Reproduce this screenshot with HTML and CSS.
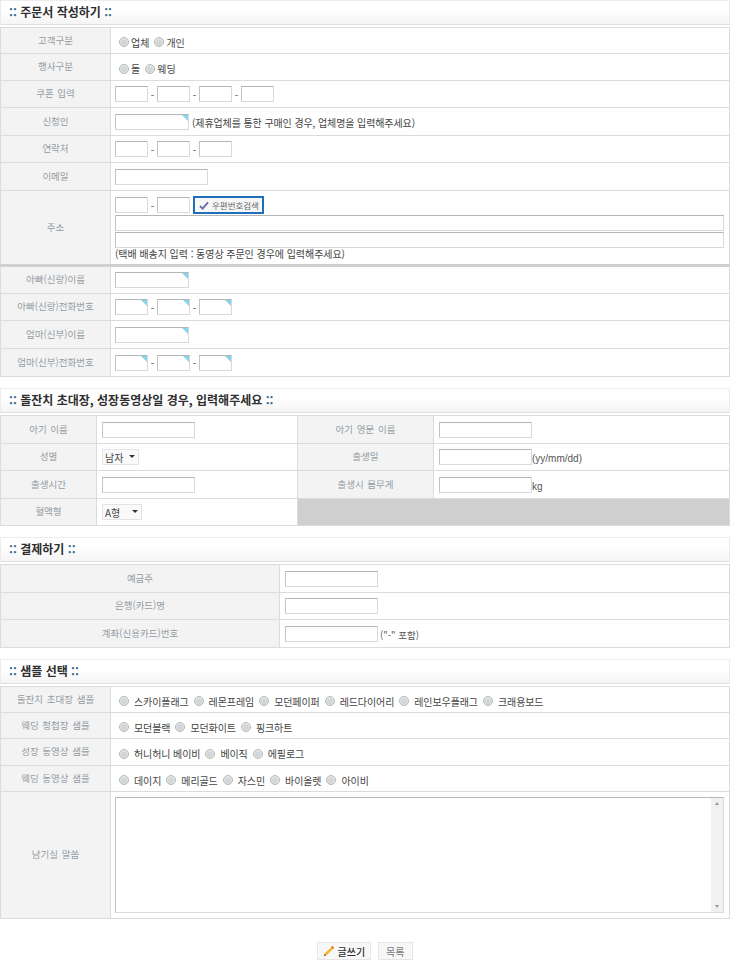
FILE: index.html
```html
<!DOCTYPE html>
<html lang="ko">
<head>
<meta charset="utf-8">
<title>주문서 작성하기</title>
<link rel="stylesheet" href="styles.css">
</head>
<body>
<h2 class="title"><span class="dots">::</span> 주문서 작성하기 <span class="dots">::</span></h2>
<table class="form cols-110">
  <tr class="r26"><th>고객구분</th><td class="opts"><label class="opt tight"><input type="radio" name="a"><span>업체</span></label><label class="opt tight"><input type="radio" name="a"><span>개인</span></label></td></tr>
  <tr class="r27"><th>행사구분</th><td class="opts"><label class="opt tight"><input type="radio" name="b"><span>돌</span></label><label class="opt tight"><input type="radio" name="b"><span>웨딩</span></label></td></tr>
  <tr class="r27"><th>쿠폰 입력</th><td><div class="line"><input class="in s"><i>-</i><input class="in s"><i>-</i><input class="in s"><i>-</i><input class="in s"></div></td></tr>
  <tr class="r28"><th>신청인</th><td><div class="line"><span class="in m req"></span><span class="note">(제휴업체를 통한 구매인 경우, 업체명을 입력해주세요)</span></div></td></tr>
  <tr class="r27"><th>연락처</th><td><div class="line"><input class="in s"><i>-</i><input class="in s"><i>-</i><input class="in s"></div></td></tr>
  <tr class="r28"><th>이메일</th><td><div class="line"><input class="in l"></div></td></tr>
  <tr class="addr"><th>주소</th><td>
    <div class="line"><input class="in s"><i>-</i><input class="in s"><button class="zip" type="button"><svg width="10" height="9" viewBox="0 0 10 9"><path d="M1 5 L3.6 7.6 L9 1.4" fill="none" stroke="#6a70ad" stroke-width="2"/></svg>우편번호검색</button></div>
    <input class="in full"><input class="in full">
    <div class="addr-note">(택배 배송지 입력 : 동영상 주문인 경우에 입력해주세요)</div>
  </td></tr>
  <tr class="r28"><th>아빠(신랑)이름</th><td><div class="line"><span class="in m req"></span></div></td></tr>
  <tr class="r27"><th>아빠(신랑)전화번호</th><td><div class="line"><span class="in s req"></span><i>-</i><span class="in s req"></span><i>-</i><span class="in s req"></span></div></td></tr>
  <tr class="r28"><th>엄마(신부)이름</th><td><div class="line"><span class="in m req"></span></div></td></tr>
  <tr class="r28"><th>엄마(신부)전화번호</th><td><div class="line"><span class="in s req"></span><i>-</i><span class="in s req"></span><i>-</i><span class="in s req"></span></div></td></tr>
</table>

<h2 class="title sec2"><span class="dots">::</span> 돌잔치 초대장, 성장동영상일 경우, 입력해주세요 <span class="dots">::</span></h2>
<table class="form cols-baby">
  <tr class="r28"><th>아기 이름</th><td><div class="line"><input class="in l"></div></td><th>아기 영문 이름</th><td><div class="line"><input class="in l"></div></td></tr>
  <tr class="r27"><th>성별</th><td><div class="line"><span class="sel w37"><select><option>남자</option></select></span></div></td><th>출생일</th><td><div class="line"><input class="in l"><span class="unit">(yy/mm/dd)</span></div></td></tr>
  <tr class="r28"><th>출생시간</th><td><div class="line"><input class="in l"></div></td><th>출생시 몸무게</th><td><div class="line"><input class="in l"><span class="unit">kg</span></div></td></tr>
  <tr class="r27"><th>혈액형</th><td><div class="line"><span class="sel w40"><select><option>A형</option></select></span></div></td><td class="blank" colspan="2"></td></tr>
</table>

<h2 class="title sec3"><span class="dots">::</span> 결제하기 <span class="dots">::</span></h2>
<table class="form cols-279">
  <tr class="r28"><th>예금주</th><td><div class="line"><input class="in l"></div></td></tr>
  <tr class="r27"><th>은행(카드)명</th><td><div class="line"><input class="in l"></div></td></tr>
  <tr class="r28"><th>계좌(신용카드)번호</th><td><div class="line"><input class="in l"><span class="unit pad">("-" 포함)</span></div></td></tr>
</table>

<h2 class="title sec3"><span class="dots">::</span> 샘플 선택 <span class="dots">::</span></h2>
<table class="form cols-110">
  <tr class="r26"><th>돌잔치 초대장 샘플</th><td class="opts"><label class="opt"><input type="radio" name="c"><span>스카이플래그</span></label><label class="opt"><input type="radio" name="c"><span>레몬프레임</span></label><label class="opt"><input type="radio" name="c"><span>모던페이퍼</span></label><label class="opt"><input type="radio" name="c"><span>레드다이어리</span></label><label class="opt"><input type="radio" name="c"><span>레인보우플래그</span></label><label class="opt"><input type="radio" name="c"><span>크래용보드</span></label></td></tr>
  <tr class="r26"><th>웨딩 청첩장 샘플</th><td class="opts"><label class="opt"><input type="radio" name="d"><span>모던블랙</span></label><label class="opt"><input type="radio" name="d"><span>모던화이트</span></label><label class="opt"><input type="radio" name="d"><span>핑크하트</span></label></td></tr>
  <tr class="r27"><th>성장 동영상 샘플</th><td class="opts"><label class="opt"><input type="radio" name="e"><span>허니허니 베이비</span></label><label class="opt"><input type="radio" name="e"><span>베이직</span></label><label class="opt"><input type="radio" name="e"><span>에필로그</span></label></td></tr>
  <tr class="r26"><th>웨딩 동영상 샘플</th><td class="opts"><label class="opt"><input type="radio" name="f"><span>데이지</span></label><label class="opt"><input type="radio" name="f"><span>메리골드</span></label><label class="opt"><input type="radio" name="f"><span>자스민</span></label><label class="opt"><input type="radio" name="f"><span>바이올렛</span></label><label class="opt"><input type="radio" name="f"><span>아이비</span></label></td></tr>
  <tr class="memo"><th>남기실 말씀</th><td><div class="memo-box"><textarea></textarea><div class="scroll"><span class="up"></span><span class="down"></span></div></div></td></tr>
</table>

<div class="actions">
  <button class="btn strong" type="button"><svg width="12" height="12" viewBox="0 0 12 12"><path d="M1 11 L2 8 L9 1.5 L10.8 3.2 L4 10 Z" fill="#f2b632"/><path d="M8.4 2 L9.3 1 L11 2.7 L10.2 3.6 Z" fill="#d8402a"/><path d="M1 11 L1.6 9 L3 10.4 Z" fill="#5b3a1e"/></svg>글쓰기</button>
  <button class="btn" type="button">목록</button>
</div>
</body>
</html>
```
FILE: styles.css
```css
* { box-sizing: border-box; }
html, body { margin: 0; padding: 0; background: #fff; }
body {
  width: 730px;
  font-family: "Noto Sans CJK KR", "Noto Sans", sans-serif;
  font-size: 10px;
  color: #444;
}
.title {
  margin: 0 0 2px;
  height: 25px;
  padding: 0 0 0 8px;
  font-size: 12px;
  line-height: 22px;
  font-weight: 700;
  color: #2e2e2e;
  border: 1px solid #ececec;
  border-bottom-color: #e0e0e0;
  background: linear-gradient(#fff 40%, #f4f4f4);
}
.dots { color: #3d6f92; }
.sec2 { margin-top: 11px; }
.sec3 { margin-top: 11px; }
.form {
  width: 730px;
  table-layout: fixed;
  border-collapse: collapse;
  border: 1px solid #dcdcdc;
}
.form th, .form td { border: 1px solid #dcdcdc; padding: 0; }
.form th {
  background: #f3f3f3;
  color: #949ca3;
  font-size: 9.5px;
  font-weight: 400;
  word-spacing: 1px;
  text-align: center;
  vertical-align: middle;
  padding-bottom: 2px;
}
.form td { padding-left: 5px; padding-right: 5px; vertical-align: middle; }
.cols-110 th { width: 110px; }
.cols-110 td { padding-left: 4px; }
.cols-279 th { width: 279px; }
.cols-baby th:nth-child(1) { width: 96px; }
.cols-baby th:nth-child(3) { width: 136px; }
.cols-baby td:nth-child(2) { width: 201px; }
.r26 { height: 26px; }
.r27 { height: 27px; }
.r28 { height: 28px; }
.addr { height: 75px; }
.addr td, .addr th { border-bottom: 3px solid #d0d0d0; }
.addr td { vertical-align: top; padding-top: 5px; }
.memo { height: 127px; }
.blank { background: #cfcfcf; }
.line { display: flex; align-items: center; color: #555; }
.line i { width: 9px; text-align: center; font-style: normal; font-size: 10px; }
.in {
  display: block;
  flex: none;
  height: 16px;
  padding: 0;
  border: 1px solid #d9d9d9;
  border-top-color: #b5b5b5;
  border-left-color: #c4c4c4;
  background: #fff;
  position: relative;
}
.s { width: 33px; }
.m { width: 74px; }
.l { width: 93px; }
.full { width: 609px; margin-top: 1px; }
.req::after {
  content: "";
  position: absolute;
  top: 0;
  right: 0;
  border-style: solid;
  border-width: 0 6px 6px 0;
  border-color: transparent #86d4ee transparent transparent;
}
.note { margin-left: 3px; padding-top: 1px; font-size: 10px; color: #444; letter-spacing: -0.1px; }
.addr-note { font-size: 10px; line-height: 11px; color: #444; letter-spacing: -0.05px; }
.unit { font-size: 10px; color: #555; padding-top: 3px; font-family: "Liberation Sans", sans-serif; }
.unit.pad { padding-left: 2px; font-family: inherit; font-size: 9.5px; }
.zip {
  display: flex;
  align-items: center;
  gap: 3px;
  width: 71px;
  height: 18px;
  margin-left: 3px;
  padding: 0 0 0 4px;
  border: 2px solid #1f6fbd;
  background: #f7f7f7;
  font: 400 8.5px "Noto Sans CJK KR", sans-serif;
  color: #666;
}
.cols-110 td.opts { padding-left: 7px; padding-top: 2px; }
.opts .opt { display: inline-flex; align-items: center; margin-right: 4px; font-size: 10px; color: #444; vertical-align: middle; }
.opts .opt span { margin-left: 5px; letter-spacing: -0.1px; }
.opts .opt.tight { margin-right: 4px; }
.opts .opt.tight span { margin-left: 2px; letter-spacing: 0; }
.opt input {
  appearance: none;
  width: 10px;
  height: 10px;
  margin: 0 0 0 1px;
  border: 1px solid #b4b8b8;
  border-radius: 50%;
  background: radial-gradient(circle at 50% 55%, #d2d6d6 0 40%, #eef0f0 75%);
}
.sel { display: block; position: relative; height: 16px; }
.w37 { width: 37px; }
.w40 { width: 40px; }
.sel select {
  appearance: none;
  display: block;
  width: 100%;
  height: 100%;
  padding: 0 0 1px 2px;
  border: 1px solid #e4e4e4;
  border-radius: 0;
  background: #fafafa;
  font: 400 10px "Noto Sans CJK KR", sans-serif;
  color: #444;
}
.sel::after {
  content: "";
  position: absolute;
  right: 4px;
  top: 6px;
  border-style: solid;
  border-width: 3px 3px 0;
  border-color: #333 transparent transparent;
}
.memo-box {
  display: flex;
  width: 609px;
  height: 116px;
  border: 1px solid #d9d9d9;
  border-top-color: #b5b5b5;
  border-left-color: #c4c4c4;
}
.memo-box textarea { flex: 1; border: 0; padding: 0; margin: 0; resize: none; outline: 0; }
.scroll {
  display: flex;
  flex-direction: column;
  justify-content: space-between;
  align-items: center;
  width: 12px;
  padding: 4px 0;
  background: #f1f1f1;
}
.up, .down { border-style: solid; border-color: transparent; }
.up { border-width: 0 2.5px 3px; border-bottom-color: #999; }
.down { border-width: 3px 2.5px 0; border-top-color: #999; }
.actions { display: flex; justify-content: center; gap: 7px; margin-top: 23px; }
.btn {
  display: flex;
  align-items: center;
  gap: 2px;
  height: 18px;
  padding: 0 7px;
  border: 1px solid #e6e6e6;
  background: #f7f7f7;
  font: 400 10px "Noto Sans CJK KR", sans-serif;
  color: #777;
}
.btn.strong { padding: 0 5px; color: #333; font-weight: 500; }
```
